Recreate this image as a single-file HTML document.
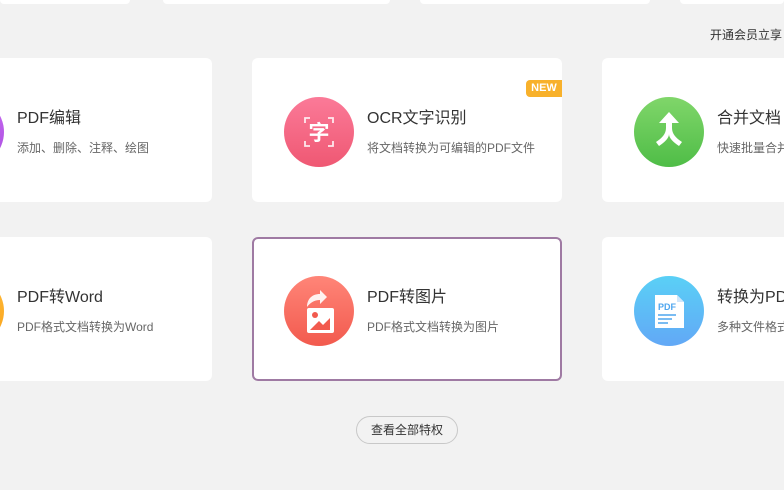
<!DOCTYPE html>
<html><head><meta charset="utf-8"><style>
body{margin:0;width:784px;height:490px;background:#f2f2f2;position:relative;overflow:hidden;font-family:"Liberation Sans","Noto Sans CJK SC",sans-serif;}
.t{position:absolute;top:0;height:4px;background:#fff;border-radius:0 0 5px 5px}
.c{position:absolute;width:310px;height:144px;background:#fff;border-radius:6px;box-sizing:border-box}
.ic{position:absolute;left:32px;top:39px;width:70px;height:70px;border-radius:50%}
.h{position:absolute;left:115px;top:46px;font-size:16px;color:#333;white-space:nowrap}
.s{position:absolute;left:115px;top:81px;font-size:12px;color:#666;white-space:nowrap}
</style></head><body>
<div class="t" style="left:0;width:130px"></div>
<div class="t" style="left:163px;width:227px"></div>
<div class="t" style="left:420px;width:230px"></div>
<div class="t" style="left:680px;width:104px"></div>
<div style="position:absolute;left:710px;top:26px;font-size:12px;color:#333;white-space:nowrap">开通会员立享</div>

<div class="c" style="left:-98px;top:58px"><div class="ic" style="background:linear-gradient(#c86af0,#a94de0)"></div><div class="h">PDF编辑</div><div class="s">添加、删除、注释、绘图</div></div>
<div class="c" style="left:252px;top:58px"><div class="ic" style="background:linear-gradient(#fb7a98,#ef5873)">
<svg width="70" height="70" viewBox="0 0 70 70"><path d="M21 26v-5h5M44 21h5v5M49 44v5h-5M26 49h-5v-5" stroke="#fff" stroke-width="1.8" fill="none" opacity=".85"/><text x="35" y="43" text-anchor="middle" font-size="21" font-weight="bold" fill="#fff" font-family="Noto Sans CJK SC,sans-serif">字</text></svg></div>
<div class="h">OCR文字识别</div><div class="s">将文档转换为可编辑的PDF文件</div>
<div style="position:absolute;right:0;top:22px;width:36px;height:17px;background:#f8b12b;border-radius:4px 0 0 4px;color:#fff;font-size:11px;font-weight:bold;line-height:17px;text-align:center">NEW</div></div>
<div class="c" style="left:602px;top:58px"><div class="ic" style="background:linear-gradient(#80d66a,#4fbd47)"><svg width="70" height="70" viewBox="0 0 70 70"><path d="M35 15l-10 11h7v5c0 6-4 10-10 14l3 4c6-4 10-8 10-12 0 4 4 8 10 12l3-4c-6-4-10-8-10-14v-5h7z" fill="#fff"/></svg></div><div class="h">合并文档</div><div class="s">快速批量合并</div></div>

<div class="c" style="left:-98px;top:237px"><div class="ic" style="background:linear-gradient(#ffbb3a,#f9a21a)"></div><div class="h">PDF转Word</div><div class="s">PDF格式文档转换为Word</div></div>
<div class="c" style="left:252px;top:237px;border:2px solid #9f7aa3"><div class="ic" style="left:30px;top:37px;background:linear-gradient(#ff8578,#f25a4e)"><svg width="70" height="70" viewBox="0 0 70 70"><path d="M23 31c0-8 5-13 13-13v-4l7 7-7 7v-4c-6 0-10 3-13 7z" fill="#fff" opacity=".9"/><rect x="23" y="32" width="27" height="25" rx="2" fill="#fff"/><circle cx="31" cy="39" r="3" fill="#f25a4e"/><path d="M26 54l9-9 4 4 7-7v12z" fill="#f25a4e"/></svg></div><div class="h" style="left:113px;top:44px">PDF转图片</div><div class="s" style="left:113px;top:79px">PDF格式文档转换为图片</div></div>
<div class="c" style="left:602px;top:237px"><div class="ic" style="background:linear-gradient(#5ad0f6,#62a8f6)"><svg width="70" height="70" viewBox="0 0 70 70"><path d="M21 19h22l7 7v26h-29z" fill="#fff"/><path d="M43 19v7h7z" fill="#cfe6fb"/><text x="24" y="34" font-size="9" font-weight="bold" fill="#4ea6ee" font-family="Liberation Sans">PDF</text><path d="M24 39h18M24 43h14M24 47h10" stroke="#4ea6ee" stroke-width="1.5"/></svg></div><div class="h">转换为PDF</div><div class="s">多种文件格式</div></div>

<div style="position:absolute;left:356px;top:416px;width:100px;height:26px;border:1px solid #c8c8c8;border-radius:14px;font-size:12px;color:#333;text-align:center;line-height:26px">查看全部特权</div>
</body></html>
